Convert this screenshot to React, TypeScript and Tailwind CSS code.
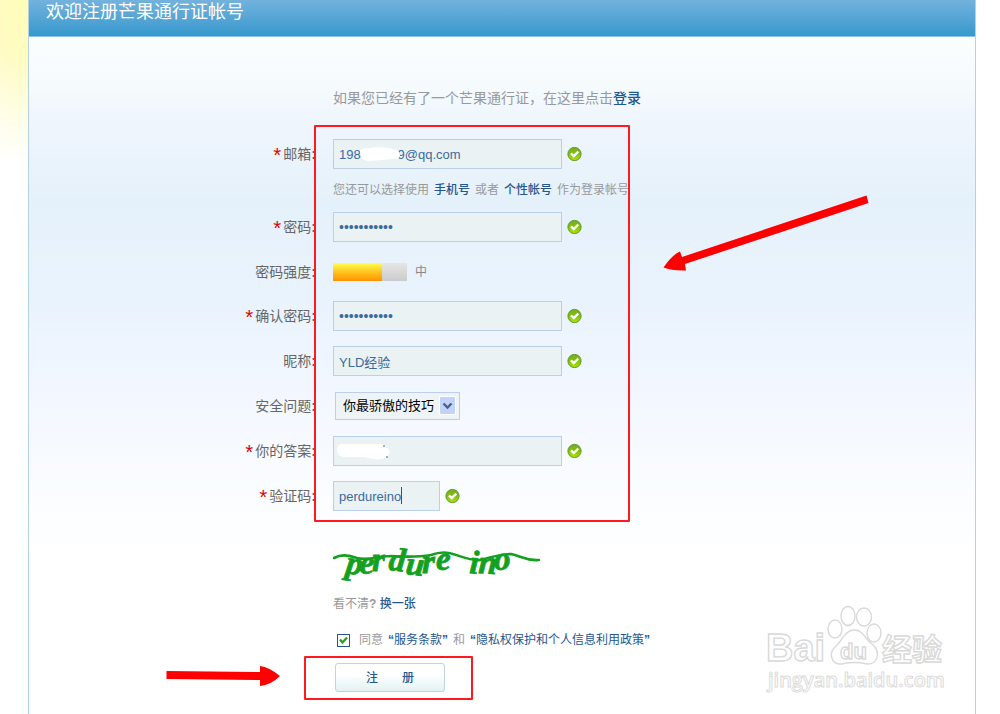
import { ReactNode, useState } from 'react'

const cjkFont = 'font-["Liberation_Sans","Noto_Sans_CJK_SC",sans-serif]'

const inputClass =
  'h-[30px] border border-[#bccfe9] bg-[#eaf2f4] px-[5px] text-[#3c6a9f] outline-none'

function ValidMark() {
  return (
    <svg width="16" height="16" viewBox="0 0 16 16" className="shrink-0" role="img" aria-label="正确">
      <defs>
        <linearGradient id="valid" x1="0" y1="0" x2="0" y2="1">
          <stop offset="0" stopColor="#78ac2e" />
          <stop offset="0.5" stopColor="#82c000" />
          <stop offset="1" stopColor="#b4e414" />
        </linearGradient>
      </defs>
      <circle cx="7.500" cy="8" r="6.6" fill="url(#valid)" stroke="#5b9a2a" strokeWidth="1" />
      <path d="M3.900 7.4 L6.700 10 L11.300 5.6" fill="none" stroke="#fff" strokeWidth="2.4" />
    </svg>
  )
}

type RowProps = {
  id?: string
  label: string
  required?: boolean
  valid?: boolean
  className?: string
  children: ReactNode
}

function Row({ id, label, required, valid, className = 'h-[30px]', children }: RowProps) {
  return (
    <div className={`flex items-center ${className}`}>
      <label htmlFor={id} className="mr-[17px] flex w-[287px] shrink-0 items-center justify-end text-sm leading-5 text-[#666]">
        {required && <span className="pt-2 font-['Liberation_Mono',monospace] text-xl leading-4 text-[#d00]">*</span>}
        {label}
        <b>:</b>
      </label>
      {children}
      {valid && <span className="ml-[5px]"><ValidMark /></span>}
    </div>
  )
}

function Captcha() {
  return (
    <svg width="220" height="55" viewBox="0 0 220 55" className="mt-6 block" role="img" aria-label="验证码图片">
      <g fill="#13a01f" stroke="#13a01f" strokeWidth="0.8" fontFamily="Liberation Serif, serif" fontSize="33" fontWeight="bold" fontStyle="italic">
        <text x="12 26 39 55 72 89 103" y="38 38 36 35 39 38 35" rotate="8 4 0 6 6 0 0">perdure</text>
        <text x="136 145 161" y="38 38 35" rotate="4 4 0">ino</text>
      </g>
      <path
        d="M1 23 C8 19 16 20 24 23 C36 26 46 21 58 21 C74 22 86 22 98 20 C106 17 114 17 120 19 C130 22 138 26 148 25 C158 22 168 19 178 19 C188 21 192 26 206 25"
        fill="none"
        stroke="#13a01f"
        strokeWidth="2.6"
        strokeLinecap="round"
      />
    </svg>
  )
}

function Watermark() {
  return (
    <svg width="190" height="100" viewBox="0 0 190 100" className="absolute top-[600px] right-[50px]" aria-hidden="true">
      <g fill="#fff" stroke="#d9d9d9" strokeWidth="1.4">
        <text x="6" y="61" fontFamily="Liberation Sans, sans-serif" fontSize="38" fontWeight="bold">Bai</text>
        <ellipse cx="75" cy="29" rx="7" ry="9" />
        <ellipse cx="88" cy="16" rx="7" ry="9.5" />
        <ellipse cx="104" cy="17" rx="7.5" ry="9" />
        <ellipse cx="114" cy="33" rx="7" ry="9" />
        <path d="M94 30 C103 30 105 39 112 44 C122 52 117 65 107 64 C98 62 90 62 82 64 C71 65 68 53 76 46 C82 41 85 30 94 30Z" />
        <text x="80" y="59" fontFamily="Liberation Sans, sans-serif" fontSize="22" fontWeight="bold">du</text>
        <text x="122" y="60" fontFamily="Noto Sans CJK SC, sans-serif" fontSize="30" fontWeight="bold">经验</text>
      </g>
      <text x="8" y="87" fontFamily="Open Sans, sans-serif" fontSize="20" fontWeight="600" fill="#fff" stroke="#dcdcdc" strokeWidth="1">
        jingyan.baidu.com
      </text>
    </svg>
  )
}

function Annotations() {
  return (
    <svg width="1000" height="714" viewBox="0 0 1000 714" className="pointer-events-none absolute top-0 left-0" aria-hidden="true">
      <g fill="none" stroke="#ff1a1f" strokeWidth="2" strokeLinejoin="round">
        <rect x="315" y="126" width="314" height="395" />
        <rect x="305" y="657" width="167" height="42" />
      </g>
      <g fill="#f00">
        <path d="M866.500 195.500 L682 257 L680 251.500 Q672 255 663.500 267.500 Q672 271 686 270.500 L685 264 L868.500 203Z" />
        <path d="M166.500 671 L260 672 L260 666 Q269 667 280 676 Q271 685 260 686 L260 680 L166.500 679Z" />
      </g>
    </svg>
  )
}

export default function App() {
  const [agreed, setAgreed] = useState(true)
  const [nickname, setNickname] = useState('YLD经验')
  const [code, setCode] = useState('perdureino')

  return (
    <div className={`relative min-h-screen overflow-hidden bg-white bg-[radial-gradient(ellipse_90px_165px_at_24px_0px,#fffcba_0%,#fffbc2_35%,#fffde0_65%,#fff_100%)] bg-no-repeat pr-6 pl-7 ${cjkFont}`}>
      <main className="min-h-screen border-x border-[#b3d1e2] bg-[linear-gradient(to_bottom,#fbfeff_37px,#f5fafd_90px,#f0f6fe_115px,#e5f1fa_200px,#e9f3fd_300px,#f2f7ff_390px,#fbfdff_500px,#fff_560px)]">
        <header className="h-[37px] border-b border-[#8fc2e2] bg-linear-to-b from-[#72b2dd] to-[#3498cd] px-[17px]">
          <h1 className="text-lg leading-6 text-white">欢迎注册芒果通行证帐号</h1>
        </header>

        <form onSubmit={(event) => event.preventDefault()} className="whitespace-nowrap">
          <p className="mt-[51px] ml-[304px] text-sm leading-5 text-[#999]">
            如果您已经有了一个芒果通行证，在这里点击<a href="#login" className="font-medium text-[#25568d]">登录</a>
          </p>

          <div className="mt-[31px]">
            <Row id="email" label="邮箱" required valid>
              <span className="relative">
                <input id="email" defaultValue={'198-' + ' '.repeat(9) + '9@qq.com'} className={`block w-[229px] text-[13px] ${inputClass}`} />
                <svg width="46" height="18" viewBox="0 0 46 18" className="absolute top-[6px] left-[25px]" aria-hidden="true">
                  <path d="M2 7 Q1 3 12 3 Q25 0 38 5 Q42 6 42 10 Q42 14 36 14 L12 16 Q4 16 3 11Z" fill="#fff" />
                </svg>
              </span>
            </Row>
          </div>
          <p className="mt-[11px] mb-3 ml-[304px] text-xs leading-5 text-[#999]">
            您还可以选择使用
            <a href="#phone" className="mx-[5px] font-medium text-[#25568d]">手机号</a>
            或者
            <a href="#custom" className="mx-[5px] font-medium text-[#25568d]">个性帐号</a>
            作为登录帐号
          </p>

          <div className="flex flex-col gap-[15px]">
            <Row id="password" label="密码" required valid>
              <input id="password" type="password" defaultValue="mangguo1234" className={`w-[229px] text-sm ${inputClass}`} />
            </Row>
            <Row label="密码强度" className="h-[29px]">
              <span className="flex h-[18px] w-[74px] bg-linear-to-b from-[#e6e6e6] to-[#cbcbcb]">
                <span className="w-2/3 bg-linear-to-b from-[#ffff4c] via-[#ffc51c] to-[#ff9100]" />
              </span>
              <span className="ml-2 text-xs leading-5 text-[#888]">中</span>
            </Row>
            <Row id="confirm" label="确认密码" required valid>
              <input id="confirm" type="password" defaultValue="mangguo1234" className={`w-[229px] text-sm ${inputClass}`} />
            </Row>
            <Row id="nickname" label="昵称" valid>
              <input id="nickname" value={nickname} onChange={(event) => setNickname(event.target.value)} className={`w-[229px] text-[13px] ${inputClass}`} />
            </Row>
            <Row id="question" label="安全问题">
              <span className="relative ml-[2px]">
                <select id="question" className="block h-7 w-[125px] appearance-none border border-[#bccfe9] bg-[#eef4f6] pl-[7px] text-[13px] text-black outline-none">
                  <option>你最骄傲的技巧</option>
                </select>
                <svg width="17" height="19" viewBox="0 0 17 19" className="pointer-events-none absolute top-1 right-1" aria-hidden="true">
                  <rect width="17" height="19" rx="1" fill="#fff" />
                  <rect x="1" y="1" width="15" height="17" rx="1" fill="#c1d2fb" />
                  <path d="M4.500 7.500 L8.500 11.500 L12.500 7.500" fill="none" stroke="#4d6185" strokeWidth="2.4" />
                </svg>
              </span>
            </Row>
            <Row id="answer" label="你的答案" required valid>
              <span className="relative">
                <input id="answer" className={`block w-[229px] text-[13px] ${inputClass}`} />
                <svg width="56" height="20" viewBox="0 0 56 20" className="absolute top-[6px] left-[3px]" aria-hidden="true">
                  <path d="M6 2 H42 Q48 1 50 5 Q56 9 52 13 Q48 19 38 17 L28 15 H8 Q0 14 1 7 Q2 2 6 2Z" fill="#fff" />
                  <path d="M48 3 v2 M51 14 v2" stroke="#3c6a9f" strokeWidth="1" />
                </svg>
              </span>
            </Row>
            <Row id="code" label="验证码" required valid>
              <span className="relative">
                <input id="code" value={code} onChange={(event) => setCode(event.target.value)} className={`block w-[107px] text-[13px] ${inputClass}`} />
                <span className="absolute top-[6px] left-[68px] h-[17px] w-px bg-[#25568d]" />
              </span>
            </Row>
          </div>

          <div className="ml-[304px] text-xs leading-5 text-[#999]">
            <Captcha />
            <p className="mt-1">
              看不清<span className="font-bold">?</span> <a href="#refresh" className="font-medium text-[#25568d]">换一张</a>
            </p>
            <div className="mt-4 flex h-5 items-center pl-1">
              <span className="relative mr-[9px] block size-[13px]">
                <input
                  id="agree"
                  type="checkbox"
                  checked={agreed}
                  onChange={(event) => setAgreed(event.target.checked)}
                  className="block size-[13px] appearance-none border border-[#25568d] bg-white"
                />
                {agreed && (
                  <svg width="13" height="13" viewBox="0 0 13 13" className="pointer-events-none absolute top-0 left-0" aria-hidden="true">
                    <path d="M3 5.500 L5.500 8.500 L10 3.500" fill="none" stroke="#21a121" strokeWidth="2.2" />
                  </svg>
                )}
              </span>
              <label htmlFor="agree">同意</label>
              <a href="#terms" className="mx-[5px] text-[#25568d]"><b>“</b>服务条款<b>”</b></a>
              和
              <a href="#privacy" className="mx-[5px] text-[#25568d]"><b>“</b>隐私权保护和个人信息利用政策<b>”</b></a>
            </div>
            <button
              type="submit"
              className="mt-[13px] ml-[2px] flex h-[29px] w-[110px] items-center justify-center gap-6 rounded-[3px] border border-[#bcd5de] bg-linear-to-b from-white from-40% to-[#e2f2f4] font-medium text-[#25568d]"
            >
              <span>注</span>
              <span>册</span>
            </button>
          </div>
        </form>
      </main>
      <Watermark />
      <Annotations />
    </div>
  )
}
